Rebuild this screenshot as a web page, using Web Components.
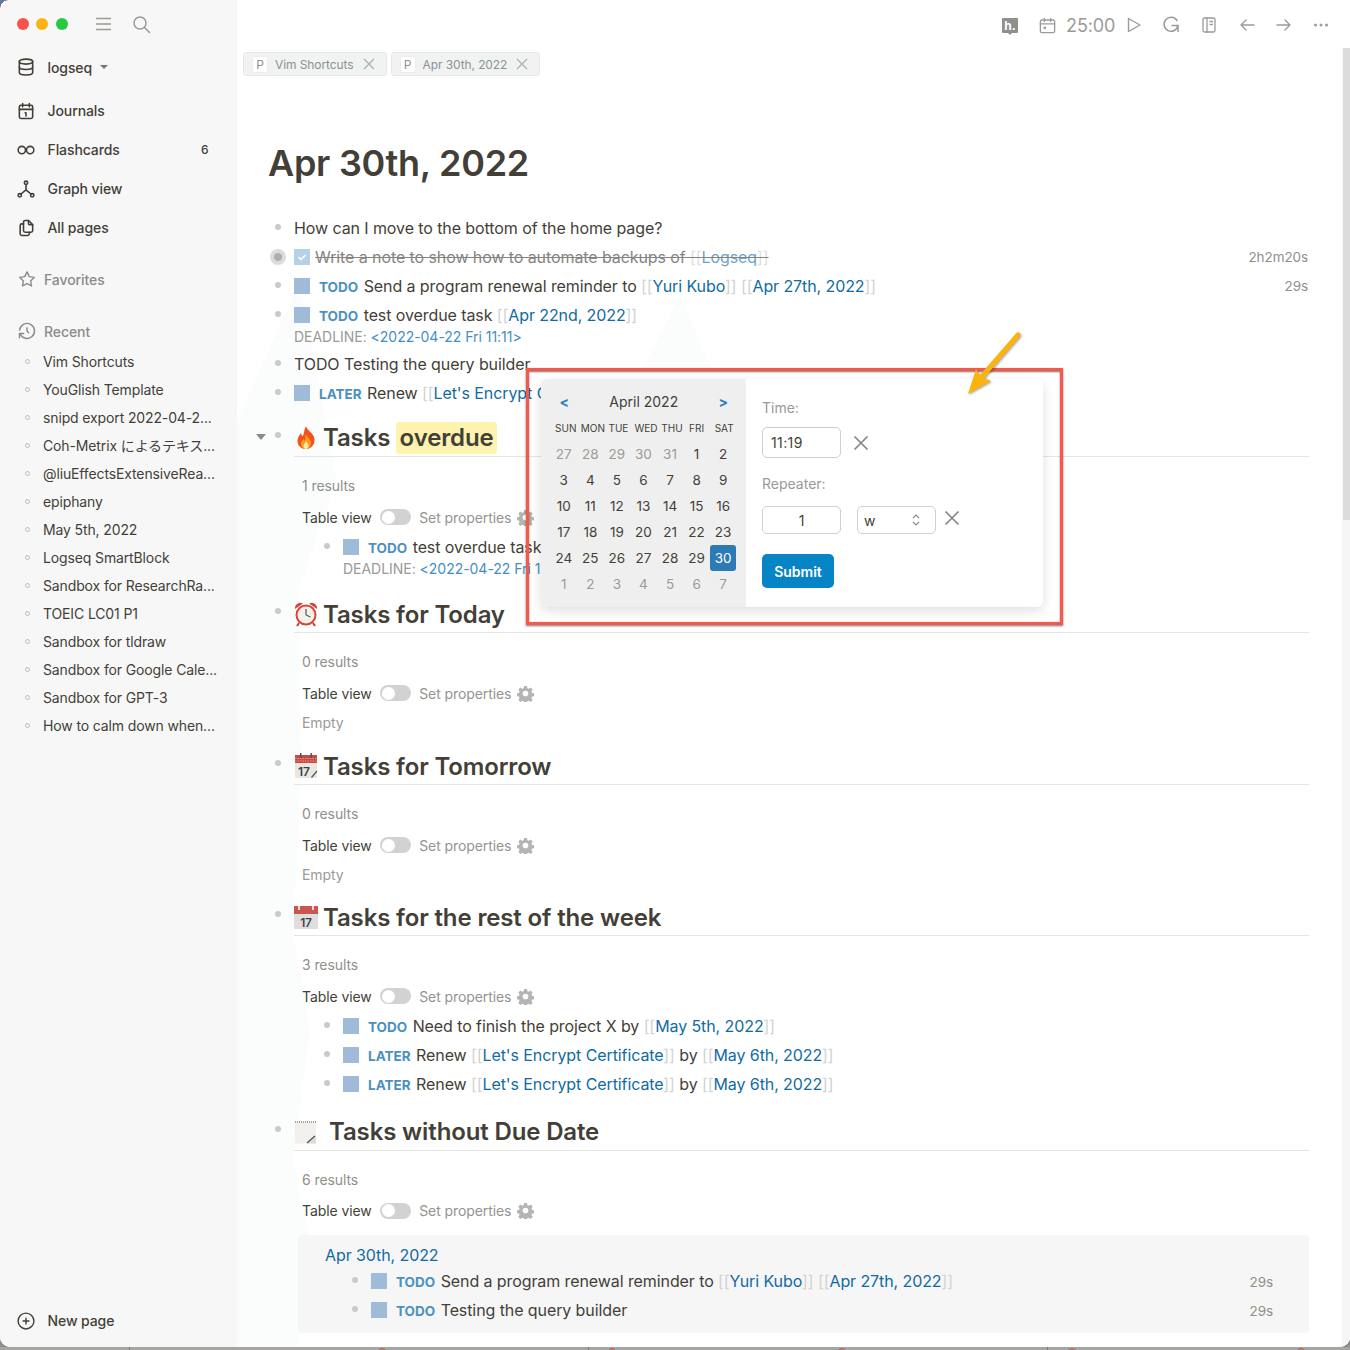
<!DOCTYPE html>
<html lang="en">
<head>
<meta charset="utf-8">
<title>Logseq</title>
<style>
html,body{margin:0;padding:0;background:#fff}
body{width:1350px;height:1350px;overflow:hidden;font-family:Inter,"Noto Sans CJK JP",sans-serif;color:#433f38;letter-spacing:-.09px}
</style>
</head>
<body>
<lq-desktop>
  <lq-sidebar>
    <lq-nav icon="db" label="logseq" caret style="height:40px;margin-top:-1px"></lq-nav>
    <lq-nav icon="cal" label="Journals" style="margin-top:4px"></lq-nav>
    <lq-nav icon="inf" label="Flashcards" badge="6"></lq-nav>
    <lq-nav icon="graph" label="Graph view"></lq-nav>
    <lq-nav icon="pages" label="All pages"></lq-nav>
    <lq-section-title icon="star" label="Favorites" style="margin-top:18px"></lq-section-title>
    <lq-section-title icon="history" label="Recent" style="margin-top:24px"></lq-section-title>
    <lq-recent style="margin-top:2px">Vim Shortcuts</lq-recent>
    <lq-recent>YouGlish Template</lq-recent>
    <lq-recent>snipd export 2022-04-2...</lq-recent>
    <lq-recent>Coh-Metrix によるテキス...</lq-recent>
    <lq-recent>@liuEffectsExtensiveRea...</lq-recent>
    <lq-recent>epiphany</lq-recent>
    <lq-recent>May 5th, 2022</lq-recent>
    <lq-recent>Logseq SmartBlock</lq-recent>
    <lq-recent>Sandbox for ResearchRa...</lq-recent>
    <lq-recent>TOEIC LC01 P1</lq-recent>
    <lq-recent>Sandbox for tldraw</lq-recent>
    <lq-recent>Sandbox for Google Cale...</lq-recent>
    <lq-recent>Sandbox for GPT-3</lq-recent>
    <lq-recent>How to calm down when...</lq-recent>
    <lq-nav slot="foot" icon="plus" label="New page"></lq-nav>
  </lq-sidebar>

  <lq-main>
    <lq-topbar slot="top"></lq-topbar>
    <lq-tabs slot="top">
      <lq-tab>Vim Shortcuts</lq-tab>
      <lq-tab>Apr 30th, 2022</lq-tab>
    </lq-tabs>
    <lq-title>Apr 30th, 2022</lq-title>

    <lq-block style="margin-top:25px">How can I move to the bottom of the home page?</lq-block>
    <lq-block ring time="2h2m20s"><lq-check></lq-check><lq-struck>Write a note to show how to automate backups of <lq-ref faded>Logseq</lq-ref></lq-struck></lq-block>
    <lq-block time="29s"><lq-task kw="TODO"></lq-task>Send a program renewal reminder to <lq-ref>Yuri Kubo</lq-ref> <lq-ref>Apr 27th, 2022</lq-ref></lq-block>
    <lq-block><lq-task kw="TODO"></lq-task>test overdue task <lq-ref>Apr 22nd, 2022</lq-ref>
      <lq-deadline slot="below">&lt;2022-04-22 Fri 11:11&gt;</lq-deadline></lq-block>
    <lq-block style="margin-top:2px">TODO Testing the query builder</lq-block>
    <lq-block><lq-task kw="LATER"></lq-task>Renew <lq-ref open>Let's Encrypt C</lq-ref></lq-block>

    <lq-query count="1 results" caret style="margin-top:15px">
      <lq-emoji slot="emoji" kind="fire"></lq-emoji>
      <span slot="title">Tasks <lq-mark>overdue</lq-mark></span>
      <lq-block nested style="margin-top:3px"><lq-task kw="TODO"></lq-task>test overdue task
        <lq-deadline slot="below">&lt;2022-04-22 Fri 1</lq-deadline></lq-block>
    </lq-query>

    <lq-query count="0 results" style="margin-top:19px">
      <lq-emoji slot="emoji" kind="clock"></lq-emoji>
      <span slot="title">Tasks for Today</span>
      <lq-empty>Empty</lq-empty>
    </lq-query>

    <lq-query count="0 results" style="margin-top:17px">
      <lq-emoji slot="emoji" kind="tear"></lq-emoji>
      <span slot="title">Tasks for Tomorrow</span>
      <lq-empty>Empty</lq-empty>
    </lq-query>

    <lq-query count="3 results" style="margin-top:16px">
      <lq-emoji slot="emoji" kind="cal17"></lq-emoji>
      <span slot="title">Tasks for the rest of the week</span>
      <lq-block nested style="margin-top:3px"><lq-task kw="TODO"></lq-task>Need to finish the project X by <lq-ref>May 5th, 2022</lq-ref></lq-block>
      <lq-block nested><lq-task kw="LATER"></lq-task>Renew <lq-ref>Let's Encrypt Certificate</lq-ref> by <lq-ref>May 6th, 2022</lq-ref></lq-block>
      <lq-block nested><lq-task kw="LATER"></lq-task>Renew <lq-ref>Let's Encrypt Certificate</lq-ref> by <lq-ref>May 6th, 2022</lq-ref></lq-block>
    </lq-query>

    <lq-query count="6 results" wide style="margin-top:17.5px">
      <lq-emoji slot="emoji" kind="note"></lq-emoji>
      <span slot="title">Tasks without Due Date</span>
      <lq-result-box title-text="Apr 30th, 2022">
        <lq-block boxed time="29s"><lq-task kw="TODO"></lq-task>Send a program renewal reminder to <lq-ref>Yuri Kubo</lq-ref> <lq-ref>Apr 27th, 2022</lq-ref></lq-block>
        <lq-block boxed time="29s"><lq-task kw="TODO"></lq-task>Testing the query builder</lq-block>
      </lq-result-box>
    </lq-query>
  </lq-main>

  <lq-date-picker slot="over"></lq-date-picker>
  <lq-annotation slot="over"></lq-annotation>
</lq-desktop>

<script>
function def(name, css, html, init){
  customElements.define(name, class extends HTMLElement{
    connectedCallback(){
      if(this.shadowRoot) return;
      const r=this.attachShadow({mode:'open'});
      const body=typeof html==='function'?html(this):html;
      r.innerHTML='<style>'+css+'</style>'+body;
      if(init) init(this,r);
    }
  });
}
const S='fill="none" stroke="currentColor" stroke-linecap="round" stroke-linejoin="round"';
const ICONS={
 db:`<svg width="20" height="20" viewBox="0 0 24 24" ${S} stroke-width="1.900"><ellipse cx="12" cy="5.500" rx="8" ry="3"/><path d="M4 5.500v6.500c0 1.700 3.600 3 8 3s8-1.300 8-3V5.500"/><path d="M4 12v6.500c0 1.700 3.600 3 8 3s8-1.300 8-3V12"/></svg>`,
 cal:`<svg width="20" height="20" viewBox="0 0 24 24" ${S} stroke-width="1.900"><rect x="4" y="5" width="16" height="16" rx="2"/><path d="M16 3v4M8 3v4M4 10h16M11 14h1v4"/></svg>`,
 inf:`<svg width="20" height="20" viewBox="0 0 24 24" ${S} stroke-width="1.900"><circle cx="7" cy="12" r="4.400"/><circle cx="17" cy="12" r="4.400"/></svg>`,
 graph:`<svg width="20" height="20" viewBox="0 0 24 24" ${S} stroke-width="1.900"><circle cx="12" cy="4.500" r="2"/><circle cx="4.500" cy="19.500" r="2"/><circle cx="19.500" cy="19.500" r="2"/><path d="M12 6.500V13M6 18l6-5 6 5"/></svg>`,
 pages:`<svg width="20" height="20" viewBox="0 0 24 24" ${S} stroke-width="1.900"><path d="M15 3v4a1 1 0 0 0 1 1h4"/><path d="M18 17h-7a2 2 0 0 1-2-2V5a2 2 0 0 1 2-2h4l5 5v7a2 2 0 0 1-2 2z"/><path d="M16 17v2a2 2 0 0 1-2 2H7a2 2 0 0 1-2-2V9a2 2 0 0 1 2-2h2"/></svg>`,
 star:`<svg width="20" height="20" viewBox="0 0 24 24" ${S} stroke-width="1.700"><path d="M12 3.500l2.700 5.600 6.100.9-4.400 4.300 1 6.100-5.400-2.900-5.400 2.900 1-6.100L3.200 10l6.100-.9z"/></svg>`,
 history:`<svg width="20" height="20" viewBox="0 0 24 24" ${S} stroke-width="1.700"><path d="M12 8v4l2 2"/><path d="M3.100 11a9 9 0 1 1 .5 4"/><path d="M3 20v-5h5"/></svg>`,
 plus:`<svg width="20" height="20" viewBox="0 0 24 24" ${S} stroke-width="1.700"><circle cx="12" cy="12" r="9.500"/><path d="M8.500 12h7M12 8.500v7"/></svg>`
};

def('lq-desktop',`:host{display:block;position:relative;width:1350px;height:1350px;overflow:hidden;background:#8f8f8d}
 .win{display:flex;width:1350px;height:1347px;background:#fff;border-radius:10px 0 10px 10px;overflow:hidden;box-shadow:0 0 2px #555}
 .corner{position:absolute;left:0;top:0;width:5px;height:5px;background:linear-gradient(135deg,#3d83c6 0 45%,#d8564a 45% 60%,#fff 60%)}
 .desk{position:absolute;left:0;right:0;top:1347px;height:3px;background:#a5a5a3}
 .desk i{position:absolute;top:.5px;width:8px;height:8px;border:1px solid #d8443c;border-radius:50%;box-sizing:border-box}
 .desk b{position:absolute;top:0;width:1px;height:3px;background:#777}`,
 `<div class="corner"></div>
 <div class="desk"><b style="left:129px"></b><b style="left:588px"></b><b style="left:1047px"></b>
 <i style="left:378px"></i><i style="left:608px"></i><i style="left:838px"></i><i style="left:1068px"></i><i style="left:1297px"></i></div>
 <div class="win"><slot></slot></div><slot name="over"></slot>`);

def('lq-sidebar',`:host{display:flex;flex:none;flex-direction:column;width:237px;height:1347px;background:#f7f7f7;box-sizing:border-box}
 .head{display:flex;align-items:center;height:48px;flex:none;color:#9a9a96}
 .dot{width:12px;height:12px;border-radius:50%;flex:none}
 .foot{margin-top:auto;padding-bottom:7px}`,
 `<div class="head">
   <span class="dot" style="margin-left:17px;background:#f8524a"></span>
   <span class="dot" style="margin-left:7px;background:#fdb314"></span>
   <span class="dot" style="margin-left:8px;background:#27c93f"></span>
   <svg style="margin-left:28px" width="15" height="14" viewBox="0 0 15 14" fill="none" stroke="currentColor" stroke-width="1.500"><path d="M0 1.500h15M0 7h15M0 12.500h15"/></svg>
   <svg style="margin-left:21px" width="19" height="19" viewBox="0 0 19 19" fill="none" stroke="currentColor" stroke-width="1.500" stroke-linecap="round"><circle cx="8" cy="8" r="6"/><path d="M12.500 12.500 17.500 17.500"/></svg>
 </div><slot></slot><div class="foot"><slot name="foot"></slot></div>`);

def('lq-nav',`:host{display:flex;align-items:center;height:39px;padding-left:16px;font-size:14px;font-weight:500;color:#433f38;flex:none;position:relative}
 svg{flex:none;display:block}
 .t{margin-left:11.500px}
 .caret{margin-left:8px;width:0;height:0;border:4px solid transparent;border-top:4px solid #77777a;border-bottom:0}
 .badge{position:absolute;left:201px;font-size:12px;font-weight:500}`,
 el=>`${ICONS[el.getAttribute('icon')]}<span class="t">${el.getAttribute('label')}</span>${el.hasAttribute('caret')?'<span class="caret"></span>':''}${el.hasAttribute('badge')?`<span class="badge">${el.getAttribute('badge')}</span>`:''}`);

def('lq-section-title',`:host{display:flex;align-items:center;height:28px;padding-left:17px;font-size:14px;font-weight:500;color:#8b8b88;flex:none}
 .t{margin-left:7px}svg{display:block}`,
 el=>`${ICONS[el.getAttribute('icon')]}<span class="t">${el.getAttribute('label')}</span>`);

def('lq-recent',`:host{display:flex;align-items:center;height:28px;padding-left:25px;font-size:14px;color:#433f38;flex:none;white-space:nowrap;letter-spacing:-.13px}
 i{width:5px;height:5px;border:1px solid #bcbcbc;border-radius:50%;box-sizing:border-box;margin-right:13px;flex:none}`,
 `<i></i><slot></slot>`);

def('lq-main',`:host{display:block;flex:1;position:relative;height:1347px;background:#fff;overflow:hidden}
 :host::before{content:"";position:absolute;inset:0;background:#fafdfc;
   clip-path:polygon(0 420px,68px 270px,66px 300px,100px 480px,62px 590px,64px 780px,56px 935px,73px 1030px,56px 1160px,73px 1240px,61px 1347px,0 1347px)}
 :host::after{content:"";position:absolute;left:0;top:0;width:1113px;height:400px;background:#fafdfc;clip-path:polygon(443px 295px,405px 370px,475px 370px)}
 .sb{position:absolute;right:0;top:48px;bottom:0;width:8px;background:#f6f6f6;z-index:2}
 .sb i{display:block;height:472px;width:7px;margin-left:1px;background:#dcdcdc}
 .top{position:relative;z-index:1}
 .page{position:relative;z-index:1;box-sizing:border-box;padding:0 41px 0 31px;width:1113px}`,
 `<div class="sb"><i></i></div><div class="top"><slot name="top"></slot></div><div class="page"><slot></slot></div>`);

def('lq-topbar',`:host{display:flex;align-items:center;justify-content:flex-end;height:50px;padding-right:21px;color:#9b9b98;box-sizing:border-box}
 svg{display:block;flex:none}
 .t{font-size:18px;margin-left:9px;letter-spacing:-.1px;width:47px}
 .h{width:16px;height:15px;background:#8f8f8c;border-radius:1px;color:#fff;font:700 12px/15px Inter,sans-serif;text-align:center;position:relative}
 .h::after{content:"";position:absolute;left:6px;top:15px;border:2px solid transparent;border-top:2px solid #8f8f8c;border-bottom:0}`,
 `<span class="h">h.</span>
 <svg style="margin-left:20px" width="19" height="19" viewBox="0 0 24 24" ${S} stroke-width="1.700"><rect x="3" y="5" width="18" height="16" rx="2"/><path d="M16 3v4M8 3v4M3 10h18"/><rect x="7" y="13.500" width="3" height="3" fill="currentColor" stroke="none"/></svg>
 <span class="t">25:00</span>
 <svg style="margin-left:13px" width="16" height="16" viewBox="0 0 16 16" ${S} stroke-width="1.400"><path d="M2.500 1.500 14 8 2.500 14.500z"/></svg>
 <svg style="margin-left:20px" width="18" height="18" viewBox="0 0 18 18" ${S} stroke-width="1.500"><path d="M15 4.500A7 7 0 1 0 16 9.500h-6"/><path d="M16 10v5.500"/></svg>
 <svg style="margin-left:21px" width="16" height="18" viewBox="0 0 16 18" ${S} stroke-width="1.300"><rect x="2" y="2" width="12" height="14" rx="1.500"/><path d="M6 2v14M9 5.500h2.500M9 8.500h2.500"/></svg>
 <svg style="margin-left:21px" width="18" height="16" viewBox="0 0 18 16" ${S} stroke-width="1.400"><path d="M16 8H3M8 3 3 8l5 5"/></svg>
 <svg style="margin-left:19px" width="18" height="16" viewBox="0 0 18 16" ${S} stroke-width="1.400"><path d="M2 8h13M10 3l5 5-5 5"/></svg>
 <svg style="margin-left:20px" width="16" height="4" viewBox="0 0 16 4" fill="currentColor"><circle cx="2.500" cy="2" r="1.500"/><circle cx="8" cy="2" r="1.500"/><circle cx="13.500" cy="2" r="1.500"/></svg>`);

def('lq-tabs',`:host{display:flex;gap:4px;height:24px;padding:2px 0 4px 6px}`,`<slot></slot>`);
def('lq-tab',`:host{display:flex;align-items:center;height:24px;box-sizing:border-box;background:#f1f3f3;border:1px solid #e6e8e8;border-radius:3px;padding:0 11px 0 8px;font-size:12px;color:#8c9292;white-space:nowrap}
 .p{display:flex;align-items:center;justify-content:center;width:16px;height:17px;background:#fff;border:1px solid #eceeee;border-radius:2px;box-sizing:border-box;margin-right:7px}
 svg{margin-left:9px;display:block}`,
 `<span class="p">P</span><slot></slot><svg width="12" height="12" viewBox="0 0 12 12" fill="none" stroke="#a9adad" stroke-width="1.100"><path d="M1 1l10 10M11 1 1 11"/></svg>`);

def('lq-title',`:host{display:block;margin-top:58px;height:50px;line-height:50px;font-size:36px;font-weight:600;color:#433f38;white-space:nowrap;letter-spacing:-.28px}`,`<slot></slot>`);

def('lq-block',`:host{display:block;font-size:16px;color:#433f38;white-space:nowrap}
 :host([nested]){margin-left:49px}
 :host([boxed]){margin-left:47px}
 .row{display:flex;align-items:center;height:29px;position:relative}
 .col{flex:none;width:26px;height:29px;display:flex;align-items:center;position:relative}
 .b{width:6px;height:6px;border-radius:50%;background:#c9cbc9;margin-left:7px;margin-top:-2px;position:relative}
 .ring{position:absolute;left:2px;top:6.500px;width:16px;height:16px;border-radius:50%;background:#dcdcdc}
 .c{flex:1;min-width:0;white-space:pre}
 .time{position:absolute;right:1px;font-size:13.500px;color:#8f8f8c;margin-top:1px}
 :host([boxed]) .time{right:0}`,
 el=>{
   // drop only the line-break whitespace left by the markup; keep real spaces between references
   for(const n of [...el.childNodes]){
     if(n.nodeType===3 && n.textContent.includes('\n')){
       const t=n.textContent.replace(/\s*\n\s*/g,'');
       if(t) n.textContent=t; else n.remove();
     }
   }
   return `<div class="row"><span class="col">${el.hasAttribute('ring')?'<span class="ring"></span>':''}<span class="b" ${el.hasAttribute('ring')?'style="background:#aeaeae;width:8px;height:8px;margin-left:6px;margin-top:0"':''}></span></span><span class="c"><slot></slot></span>${el.hasAttribute('time')?`<span class="time">${el.getAttribute('time')}</span>`:''}</div><slot name="below"></slot>`;
 });

def('lq-task',`:host{display:inline}
 .m{display:inline-block;width:16px;height:16px;background:#9fbbd9;vertical-align:-2px;margin-right:9px}
 .k{font-size:13.500px;font-weight:700;color:#4b91bf;margin-right:5.500px;letter-spacing:0}`,
 el=>`<span class="m"></span><span class="k">${el.getAttribute('kw')}</span>`);

def('lq-check',`:host{display:inline-block;vertical-align:-2px;width:16px;height:16px;background:#b4d1e6;margin-right:5px}
 svg{display:block}`,
 `<svg width="16" height="16" viewBox="0 0 16 16" fill="none" stroke="#fff" stroke-width="1.600"><path d="M4.500 8.200 7 10.500l4.500-4.500"/></svg>`);
def('lq-struck',`:host{color:#85847f;text-decoration:line-through}`,`<slot></slot>`);
def('lq-ref',`:host{display:inline}
 .br{color:#d3d3d1}.l{color:#106ba3}
 :host([faded]) .l{color:#6fa3c8}
 :host([faded]) .br{color:#e0e0de}`,
 el=>`<span class="br">[[</span><span class="l"><slot></slot></span>${el.hasAttribute('open')?'':'<span class="br">]]</span>'}`);
def('lq-deadline',`:host{display:block;margin:-2px 0 2px 26px;height:20px;line-height:20px;font-size:14px;color:#9a9a97;letter-spacing:-.03px}
 span{color:#3f8fc4}`,`DEADLINE: <span><slot></slot></span>`);
def('lq-mark',`:host{display:inline-block;background:#fdf3ae;border-radius:3px;padding:0 3.500px;line-height:32px}`,`<slot></slot>`);
def('lq-empty',`:host{display:block;margin-top:8px;height:20px;line-height:20px;font-size:14px;color:#9a9a97;padding-left:34px}`,`<slot></slot>`);

const GEAR=`<svg width="17" height="17" viewBox="0 0 24 24" fill="#b4b4b2"><path fill-rule="evenodd" d="M10 1.500h4l.6 3 2.100.9 2.600-1.700 2.800 2.800-1.700 2.600.9 2.100 3 .6v4l-3 .6-.9 2.100 1.700 2.600-2.800 2.800-2.600-1.700-2.100.9-.6 3h-4l-.6-3-2.100-.9-2.600 1.700-2.800-2.800 1.700-2.600-.9-2.100-3-.6v-4l3-.6.9-2.100-1.700-2.600 2.800-2.800 2.600 1.700 2.100-.9zM12 8a4 4 0 1 0 0 8 4 4 0 0 0 0-8z"/></svg>`;

def('lq-query',`:host{display:block;position:relative}
 .h{display:flex;align-items:center;height:32px;padding:0 0 2px 0;margin-left:26px;border-bottom:1px solid #e6e6e0;font-size:24px;font-weight:600;letter-spacing:-.14px;color:#433f38;white-space:nowrap;position:relative}
 .bul{position:absolute;left:-19px;top:10px;width:6px;height:6px;border-radius:50%;background:#c9cbc9}
 .tri{position:absolute;left:-38px;top:12px;border:5px solid transparent;border-top:6px solid #8a8a88;border-bottom:0}
 .em{flex:none;display:block;margin-right:5px;line-height:0}
 :host([wide]) .em{margin-right:12px}
 .count{margin-top:19px;height:20px;line-height:20px;padding-left:34px;font-size:14px;color:#8f8f8c}
 .ctl{display:flex;align-items:center;margin-top:9px;height:24px;padding-left:34px;font-size:14px;color:#433f38;white-space:nowrap}
 .sw{width:31px;height:16px;border-radius:8px;background:#d2d2d0;margin:0 8px 0 8.500px;position:relative;flex:none}
 .sw::after{content:"";position:absolute;left:1.500px;top:1.500px;width:13px;height:13px;border-radius:50%;background:#fff}
 .set{color:#949491;margin-right:6px}
 svg{display:block}`,
 el=>`<div class="h">${el.hasAttribute('caret')?'<span class="tri"></span>':''}<span class="bul"></span><span class="em"><slot name="emoji"></slot></span><slot name="title"></slot></div>
 <div class="count">${el.getAttribute('count')}</div>
 <div class="ctl">Table view<span class="sw"></span><span class="set">Set properties</span>${GEAR}</div><slot></slot>`);

const EMO={
 fire:`<svg width="24" height="26" viewBox="0 0 24 26"><path d="M12 1c1 4 6 6 8 11 2 6-2 12-8 12S2 19 4 13c.6-2 2-3 3-5 .5 2 1 3 2 3 1-3 1-6 3-10z" fill="#f4511e"/><path d="M12 9c.5 3 5 5 5 9 0 3-2.200 6-5 6s-5.500-3-5-6c.3-2 1.800-2.500 2.500-4 .7 1 1 1.500 1.300 1.500C11.500 14 11 11 12 9z" fill="#fb9a1b"/><path d="M12 16c.5 1.500 2.500 2.500 2.500 4.500S13.500 24 12 24s-2.800-1.500-2.500-3.500c.2-1.500 2-2.500 2.500-4.500z" fill="#fde9a0"/></svg>`,
 clock:`<svg width="24" height="26" viewBox="0 0 24 26"><path d="M1 8a5.500 5.500 0 0 1 8-5.500zM23 8a5.500 5.500 0 0 0-8-5.500z" fill="#d8453a"/><circle cx="12" cy="14" r="10.500" fill="#d8453a"/><circle cx="12" cy="14" r="8.500" fill="#f4f1ea"/><path d="M12 14V8M12 14l4.500 2" stroke="#555" stroke-width="1.200" fill="none"/><path d="M5 22l-2 3M19 22l2 3" stroke="#c43d33" stroke-width="2"/></svg>`,
 tear:`<svg width="24" height="26" viewBox="0 0 24 26"><rect x="1" y="2" width="22" height="23" fill="#e9e7e2"/><rect x="1" y="2" width="22" height="8" fill="#c94a40"/><path d="M1 5.500h22M1 8h22" stroke="#eaa59f" stroke-width=".8" stroke-dasharray="1.500 1"/><rect x="6" y="0" width="1.500" height="5" fill="#555"/><rect x="16.500" y="0" width="1.500" height="5" fill="#555"/><text x="4" y="22.500" font-family="Inter,sans-serif" font-size="12" fill="#3d3d3d" letter-spacing="0">17</text><path d="M17.500 24.500 23 18" stroke="#555" stroke-width="1.200"/></svg>`,
 cal17:`<svg width="24" height="24" viewBox="0 0 24 24"><rect x="0" y="1" width="24" height="23" fill="#dedede"/><rect x="0" y="1" width="24" height="8" fill="#c8574f"/><path d="M5 0v5M19 0v5" stroke="#fff" stroke-width="1.500"/><text x="12" y="21.500" text-anchor="middle" font-family="Inter,sans-serif" font-size="12" fill="#444">17</text></svg>`,
 note:`<svg width="23" height="24" viewBox="0 0 23 24"><rect x="1" y="1.500" width="21" height="22" fill="#f1f0ec"/><path d="M1 2h21" stroke="#888" stroke-width="1.500" stroke-dasharray="1 1"/><path d="M1 23.500h13l8-7v7z" fill="#dcdcdc"/><path d="M13 23 21 16" stroke="#555" stroke-width="1.400"/></svg>`
};
def('lq-emoji',`:host{display:block;line-height:0}svg{display:block}`,el=>EMO[el.getAttribute('kind')]);

def('lq-result-box',`:host{display:block;margin:12px 0 0 30px;padding:10px 36px 8px 27px;background:#f6f6f6;border-radius:4px}
 .t{height:20px;line-height:20px;font-size:16px;color:#106ba3;margin-bottom:2px}
 .list{margin-left:-27px}`,
 el=>`<div class="t">${el.getAttribute('title-text')}</div><div class="list"><slot></slot></div>`);

def('lq-date-picker',`:host{position:absolute;left:541px;top:379px;width:502px;height:228px;display:flex;background:#fff;border-radius:6px;box-shadow:0 4px 12px rgba(0,0,0,.13);font-family:Inter,sans-serif;color:#433f38;z-index:3;letter-spacing:0}
 .cal{width:205px;flex:none;box-sizing:border-box;padding:10px 9px 10px 9.500px;background:#efefef;border-radius:6px 0 0 6px}
 .hd{display:flex;align-items:center;justify-content:space-between;height:26px;font-size:14px;padding:0 9px;position:relative;top:-1px}
 .hd b{color:#2c7fbf;font-weight:700;font-size:14px}
 .g{display:grid;grid-template-columns:repeat(7,26.570px);grid-auto-rows:26px;align-items:center;justify-items:center;font-size:13.500px}
 .g span{display:flex;align-items:center;justify-content:center;width:26.570px;height:26px;box-sizing:border-box}
 .g .d{font-size:10px;font-weight:400;white-space:nowrap}
 .o{color:#9b9b98}
 .s{background:#2d7ab5;color:#fff;border-radius:3px}
 .r{padding:19px 0 0 16px;font-size:14px}
 .lab{height:20px;line-height:20px;color:#9a9a97}
 .line{display:flex;align-items:center}
 .inp{box-sizing:border-box;width:79px;background:#fff;border:1px solid #cfcfcc;border-radius:5px;font-size:14px;display:flex;align-items:center}
 svg{display:block;flex:none}
 .btn{display:inline-flex;align-items:center;justify-content:center;margin-top:20px;width:72px;height:34px;background:#0784c6;color:#fff;border-radius:5px;font-weight:600}`,
 ()=>{
  const off=[4,5,3,5,4,0,2];
  const dn=['SUN','MON','TUE','WED','THU','FRI','SAT'].map((d,i)=>`<span class="d" style="padding-left:${off[i]}px">${d}</span>`).join('');
  const c=[];
  [27,28,29,30,31].forEach(n=>c.push(`<span class="o">${n}</span>`));
  for(let n=1;n<=30;n++) c.push(`<span${n===30?' class="s"':''}>${n}</span>`);
  for(let n=1;n<=7;n++) c.push(`<span class="o">${n}</span>`);
  const X=`<svg width="16" height="16" viewBox="0 0 16 16" fill="none" stroke="#858583" stroke-width="1.700"><path d="M1.500 1.500l13 13M14.500 1.500l-13 13"/></svg>`;
  return `<div class="cal"><div class="hd"><b>&lt;</b><span>April 2022</span><b>&gt;</b></div><div class="g">${dn}${c.join('')}</div></div>
  <div class="r"><div class="lab">Time:</div>
   <div class="line" style="margin-top:9px;gap:12px"><span class="inp" style="height:31px;padding-left:8px;letter-spacing:.4px;padding-bottom:1px">11:19</span>${X}</div>
   <div class="lab" style="margin-top:16px">Repeater:</div>
   <div class="line" style="margin-top:12px"><span class="inp" style="height:28px;justify-content:center">1</span>
     <span class="inp" style="height:28px;margin-left:16px;padding-left:6px;position:relative">w<svg style="position:absolute;right:14px;top:5px" width="10" height="16" viewBox="0 0 10 16" fill="none" stroke="#8a8a88" stroke-width="1.200"><path d="M2 6l3-3 3 3M2 10l3 3 3-3"/></svg></span>
     <span style="margin-left:8px;margin-top:-4px">${X}</span></div>
   <span class="btn">Submit</span></div>`;
 });

def('lq-annotation',`:host{position:absolute;left:0;top:0;width:0;height:0;z-index:4;display:block}
 .box{position:absolute;left:526px;top:368px;width:537px;height:257px;box-sizing:border-box;border:3px solid #f8574a;box-shadow:0 1px 2px rgba(0,0,0,.55),inset 0 1px 2px rgba(0,0,0,.55)}
 svg{position:absolute;left:950px;top:325px;filter:drop-shadow(1px 1px 1px rgba(0,0,0,.35))}`,
 `<div class="box"></div><svg width="80" height="80" viewBox="0 0 80 80"><path d="M68 10 29 55" stroke="#fbb40f" stroke-width="5" stroke-linecap="round" fill="none"/><path d="M18 69 26 44 31 52 41 56z" fill="#fbb40f"/></svg>`);
</script>
</body>
</html>
